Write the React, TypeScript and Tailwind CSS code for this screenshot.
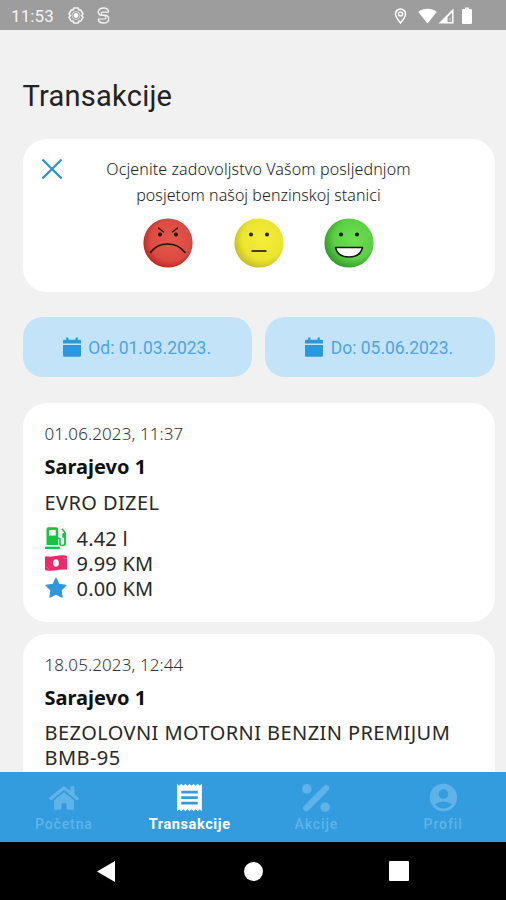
import type { ReactNode } from "react";
import { FaHome } from "react-icons/fa";
import { MdAccountCircle, MdReceipt } from "react-icons/md";

function StatusBar() {
  return (
    <header className="flex h-[30px] shrink-0 items-center bg-[#9d9d9d] pt-[1px] pl-[11px] font-['Roboto',sans-serif] text-white">
      <span className="w-[57px] text-[17px] leading-[30px] font-normal tracking-[0.1px] text-[#f4f4f4]">11:53</span>
      <svg className="h-[17px] w-[16px]" viewBox="0 0 16 17" fill="none" stroke="#f2f2f2">
        <path d="M5.8 1h4.4l.7 2 2 .2 2 3.6-1.3 1.7 1.3 1.8-2 3.5-2 .3-.7 1.9H5.8l-.7-1.9-2-.3-2-3.5 1.3-1.8-1.3-1.7 2-3.6 2-.2z" strokeWidth="1.7" strokeLinejoin="round" />
        <circle cx="8" cy="8.5" r="4" strokeWidth=".7" />
        <circle cx="8" cy="8.5" r="2.4" fill="#fff" stroke="none" />
      </svg>
      <svg className="ml-[13px] h-[17px] w-[13px]" viewBox="0 0 13 17" fill="none" stroke="#f2f2f2" strokeWidth="1.4">
        <path d="M11.700 5A5.300 4.600 0 0 0 6.500 1C3.400 1 1.300 2.700 1.300 4.800c0 2.200 1.500 3.500 4 3.500h2.200c2.600 0 4.200 1.400 4.200 3.600 0 2.500-2.200 4.100-5.200 4.100s-5.200-1.600-5.200-4.100" />
        <path d="M12 5.200H5.500q-1.300 0-1.300 1.500T5.800 8.300M1 12h6.500q1.300 0 1.300-1.600T7.200 8.700" strokeWidth="1.200" />
      </svg>
      <svg className="ml-[284px] h-[16px] w-[13px]" viewBox="0 0 12 16" fill="none" stroke="#fff">
        <path d="M6 15C3.200 11.500 1 8.800 1 5.900a5 5 0 0 1 10 0C11 8.800 8.800 11.500 6 15z" strokeWidth="1.5" />
        <circle cx="6" cy="6" r="2" strokeWidth="1.500" />
      </svg>
      <svg className="ml-[11px] h-[16px] w-[19px]" viewBox="0 0 19 16">
        <path d="M.3 4C5.500-.4 13.500-.4 18.700 4L9.500 15.500z" fill="#fff" />
      </svg>
      <svg className="ml-[1px] h-[16px] w-[16px]" viewBox="0 0 16 16">
        <path d="M15.500.5v15H.5z" fill="#fff" />
        <path d="M14 4.500v9.500H9.500V9z" fill="#9d9d9d" />
        <path d="M11.500 10h1v3h-1z" fill="#d5d5d5" />
      </svg>
      <svg className="ml-[8px] h-[17px] w-[10px]" viewBox="0 0 10 17">
        <path d="M3 .5h4V2h2q1 0 1 1v13q0 1-1 1H1q-1 0-1-1V3q0-1 1-1h2z" fill="#fff" />
      </svg>
    </header>
  );
}

function Faces() {
  return (
    <div className="mt-[10px] flex gap-[40.5px] pl-[120.500px]">
      <svg className="size-[50px]" viewBox="0 0 50 50" fill="none" stroke="#171717" strokeLinecap="round">
        <defs>
          <radialGradient id="red" cx=".55" cy=".45" r=".55">
            <stop offset="0" stopColor="#e4584c" />
            <stop offset=".75" stopColor="#dc4a40" />
            <stop offset="1" stopColor="#bd2f27" />
          </radialGradient>
        </defs>
        <circle cx="25" cy="25" r="24.600" fill="url(#red)" stroke="none" />
        <path d="M15.500 10l5 4M34.500 10L29.500 14" strokeWidth="1.200" />
        <circle cx="17" cy="16.500" r="2" fill="#171717" stroke="none" />
        <circle cx="33" cy="16.500" r="2" fill="#171717" stroke="none" />
        <path d="M7.500 34.500c8-11.500 26-11.500 34.500 0" strokeWidth="1.500" />
      </svg>
      <svg className="size-[50px]" viewBox="0 0 50 50">
        <defs>
          <radialGradient id="yellow" cx=".58" cy=".42" r=".6">
            <stop offset="0" stopColor="#f3ed3d" />
            <stop offset=".7" stopColor="#ebe52e" />
            <stop offset="1" stopColor="#c8bf24" />
          </radialGradient>
        </defs>
        <circle cx="25" cy="25" r="24.600" fill="url(#yellow)" />
        <circle cx="17" cy="16.500" r="2" fill="#222" />
        <circle cx="33" cy="16.500" r="2" fill="#222" />
        <path d="M17.500 33h15" stroke="#222" strokeWidth="1.700" />
      </svg>
      <svg className="size-[50px]" viewBox="0 0 50 50">
        <defs>
          <radialGradient id="green" cx=".6" cy=".42" r=".62">
            <stop offset="0" stopColor="#6de052" />
            <stop offset=".65" stopColor="#5bd044" />
            <stop offset="1" stopColor="#34992a" />
          </radialGradient>
        </defs>
        <circle cx="25" cy="25" r="24.600" fill="url(#green)" />
        <circle cx="17" cy="16.500" r="2" fill="#161616" />
        <circle cx="33" cy="16.500" r="2" fill="#161616" />
        <path d="M11.500 29.500h27C37 36 31.500 39 25 39s-12-3-13.500-9.500z" fill="#fff" stroke="#161616" strokeWidth="1.500" strokeLinejoin="round" />
      </svg>
    </div>
  );
}

function DateButton({ label }: { label: string }) {
  return (
    <button className="flex h-[60px] flex-1 items-center rounded-[20px] bg-[#c3e3f8] pl-[40.300px] font-['Roboto',sans-serif] text-[17.500px] font-normal tracking-[-0.02px] whitespace-nowrap text-[#4fa4df]">
      <svg className="mr-[7.500px] h-[20px] w-[18px] shrink-0" viewBox="0 0 18 20" fill="#2b98dd">
        <path d="M0 6.500V4q0-1.200 1.200-1.200h2V.6h2.200v2.200h7.200V.6h2.200v2.200h2Q18 2.800 18 4v2.500zM0 8h18v10.500q0 1.300-1.200 1.300H1.200Q0 19.800 0 18.500z" />
      </svg>
      <span className="pt-[2px]">{label}</span>
    </button>
  );
}

function FuelIcon() {
  return (
    <svg className="mb-[2px] h-[22px] w-[22px]" viewBox="0 0 22 22">
      <path fillRule="evenodd" d="M1.500 2.500Q1.500.3 3.500.3h7.700q2 0 2 2.200V18H1.500zM4 3v5.500h6.700V3z" fill="#12c545" />
      <path d="M0 19.600h14.800V22H0z" fill="#12c545" />
      <path d="M13 10.500h1.300q1.500 0 1.500 1.500v4.200q0 1.500 1.600 1.500t1.700-1.500V11l-1.800-.8V6.400l1.800-.6-2.600-3.600 1.100-1 2.700 3.600q.8 1.200.8 3V16.200q0 3-3.700 3T14.200 16v-4H13z" fill="#12c545" />
    </svg>
  );
}

function MoneyIcon() {
  return (
    <svg className="mb-[2px] h-[16px] w-[22px]" viewBox="0 0 22 16">
      <path fillRule="evenodd" d="M0 2.500Q0 1 1.300 1.200C8 2.900 13-.6 20.700.6 21.500.7 22 1.200 22 2v11.500q0 1.400-1.300 1.300C14 13.500 8.500 17 1.300 15.400 .5 15.200 0 14.700 0 14zM11 4.300c-1.700 0-2.900 1.600-2.900 3.700s1.200 3.700 2.900 3.700 2.900-1.600 2.900-3.700S12.700 4.300 11 4.300z" fill="#f02869" />
      <path d="M.8 11.800q2.400.2 2.600 2.700M18.600 1.500q.2 2.300 2.600 2.500" fill="none" stroke="#f87ca4" strokeWidth=".8" />
    </svg>
  );
}

function StarIcon() {
  return (
    <svg className="mb-[2px] size-[22px]" viewBox="0 0 22 22">
      <path d="M11 1.200l3 6.200 6.900 1-5 4.800 1.200 6.900L11 16.900l-6.100 3.200 1.200-6.900-5-4.800 6.900-1z" fill="#2d98dc" stroke="#2d98dc" strokeWidth="1.200" strokeLinejoin="round" />
    </svg>
  );
}

function PercentIcon() {
  return (
    <svg className="size-[28px]" viewBox="0 0 28 28" fill="currentColor">
      <circle cx="4.800" cy="4.800" r="4.800" />
      <circle cx="23.200" cy="23.200" r="4.800" />
      <path d="M4.200 24.200L24.200 4" stroke="currentColor" strokeWidth="6.200" strokeLinecap="round" />
    </svg>
  );
}

function Value({ icon, children }: { icon: ReactNode; children: ReactNode }) {
  return (
    <div className="flex h-[25px] items-center">
      <span className="flex w-[32px] shrink-0">{icon}</span>
      <span className="text-[20px] font-normal tracking-[0.2px]">{children}</span>
    </div>
  );
}

function Heading({ date }: { date: string }) {
  return (
    <>
      <p className="h-[24px] text-[17px] leading-[24px] tracking-[0.1px] text-[#333]">{date}</p>
      <h2 className="mt-[5px] h-[30px] text-[20px] leading-[31px] font-bold tracking-[0px] text-[#111]">Sarajevo 1</h2>
    </>
  );
}

function NavItem({ icon, label, active = false }: { icon: ReactNode; label: string; active?: boolean }) {
  return (
    <div className={active ? "flex flex-1 flex-col items-center text-white" : "flex flex-1 flex-col items-center pl-[1px] text-[#60b3e8]"}>
      <span className="flex h-[31px] items-center justify-center">{icon}</span>
      <span className={active ? "mt-[2px] text-[14.500px] leading-[20px] font-bold tracking-[0.6px]" : "mt-[1px] text-[14px] leading-[20px] font-medium tracking-[0.9px]"}>{label}</span>
    </div>
  );
}

export default function App() {
  return (
    <div className="flex h-[900px] w-[506px] flex-col overflow-hidden bg-[#f1f1f1] font-['Noto_Sans','Open_Sans',sans-serif] font-light text-[#292929]">
      <StatusBar />
      <main className="min-h-0 flex-1 overflow-hidden pr-[11.5px] pl-[22.5px]">
        <h1 className="mt-[46px] h-[40px] font-['Roboto',sans-serif] text-[29px] leading-[40px] font-normal tracking-[0.25px] text-[#222]">Transakcije</h1>
        <section className="mt-[23px] h-[153px] rounded-[24px] bg-white pt-[17px]">
          <div className="flex">
            <svg className="mt-[3px] ml-[19px] size-[20px]" viewBox="0 0 20 20" stroke="#2894da" strokeWidth="2.300" strokeLinecap="round">
              <path d="M1.200 1.200l17.600 17.600M18.800 1.200L1.200 18.800" />
            </svg>
            <p className="ml-[44px] w-[306px] text-center text-[16px] leading-[26px] whitespace-nowrap text-[#222]">
              <span className="tracking-[0.12px]">Ocjenite zadovoljstvo Vašom posljednjom</span>
              <br />
              <span className="tracking-[0.05px]">posjetom našoj benzinskoj stanici</span>
            </p>
          </div>
          <Faces />
        </section>
        <div className="mt-[25px] flex gap-[13px]">
          <DateButton label="Od: 01.03.2023." />
          <DateButton label="Do: 05.06.2023." />
        </div>
        <section className="mt-[26px] h-[219px] rounded-[24px] bg-white pt-[19px] pl-[22px]">
          <Heading date="01.06.2023, 11:37" />
          <p className="mt-[9px] h-[25px] text-[20px] leading-[25px] font-normal tracking-[0.4px]">EVRO DIZEL</p>
          <div className="mt-[11px]">
            <Value icon={<FuelIcon />}>4.42 l</Value>
            <Value icon={<MoneyIcon />}>9.99 KM</Value>
            <Value icon={<StarIcon />}>0.00 KM</Value>
          </div>
        </section>
        <section className="mt-[12px] h-[219px] rounded-[24px] bg-white pt-[19px] pl-[22px]">
          <Heading date="18.05.2023, 12:44" />
          <p className="mt-[9px] text-[20px] leading-[24.500px] font-normal tracking-[0.43px] whitespace-nowrap">
            BEZOLOVNI MOTORNI BENZIN PREMIJUM
            <br />
            BMB-95
          </p>
        </section>
      </main>
      <nav className="flex h-[70px] shrink-0 bg-[#329cdf] pt-[10px] font-['Roboto',sans-serif]">
        <NavItem icon={<FaHome className="h-[30px] w-[30px]" />} label="Početna" />
        <NavItem icon={<MdReceipt className="size-[33px]" />} label="Transakcije" active />
        <NavItem icon={<PercentIcon />} label="Akcije" />
        <NavItem icon={<MdAccountCircle className="size-[33px]" />} label="Profil" />
      </nav>
      <footer className="flex h-[58px] shrink-0 items-center bg-black pl-[97px]">
        <svg className="h-[21px] w-[18px]" viewBox="0 0 18 21" fill="#fff">
          <path d="M18 0v21L0 10.500z" />
        </svg>
        <span className="ml-[129px] size-[19px] rounded-full bg-white" />
        <span className="ml-[126px] size-[20px] rounded-[1px] bg-white" />
      </footer>
    </div>
  );
}
